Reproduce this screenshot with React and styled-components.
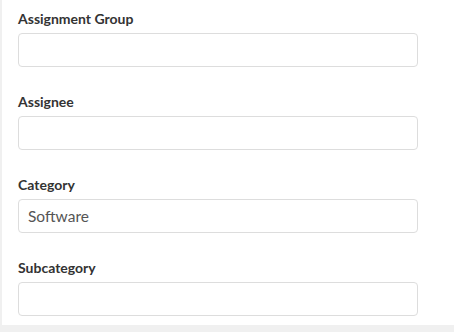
import React from "react";
import styled, { createGlobalStyle } from "styled-components";

const Global = createGlobalStyle`
  html, body { margin: 0; padding: 0; background: #f0f0f0; }
  body { font-family: Lato, "Open Sans", sans-serif; }
`;

const Panel = styled.div`
  margin-left: 2px;
  background: #ffffff;
  height: 325px;
  box-sizing: border-box;
  padding: 10px 16px 9px;
  display: flex;
  flex-direction: column;
  gap: 26px;
`;

const Field = styled.div`
  display: flex;
  flex-direction: column;
  gap: 5px;
`;

const Label = styled.label`
  font-family: Lato, sans-serif;
  font-weight: 700;
  font-size: 14px;
  line-height: 18px;
  color: #333333;
`;

const Input = styled.input`
  box-sizing: border-box;
  width: 400px;
  height: 34px;
  border: 1px solid #dddddd;
  border-radius: 4px;
  padding: 0 9px;
  font-family: Lato, sans-serif;
  font-size: 15.5px;
  color: #555555;
  background: #fff;
  outline: none;
`;

const fields = [
  { label: "Assignment Group", value: "" },
  { label: "Assignee", value: "" },
  { label: "Category", value: "Software" },
  { label: "Subcategory", value: "" },
];

export default function App() {
  return (
    <>
      <Global />
      <Panel>
        {fields.map((f) => (
          <Field key={f.label}>
            <Label>{f.label}</Label>
            <Input defaultValue={f.value} readOnly />
          </Field>
        ))}
      </Panel>
    </>
  );
}
